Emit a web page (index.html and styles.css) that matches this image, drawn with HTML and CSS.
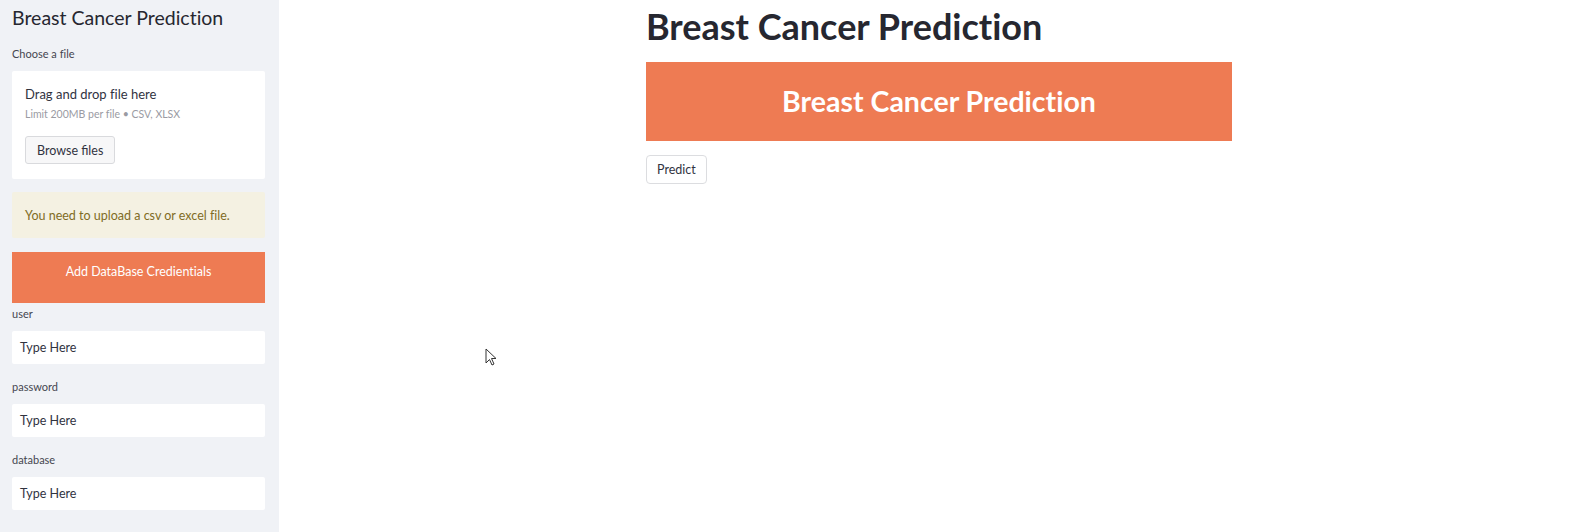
FILE: index.html
```html
<!DOCTYPE html>
<html lang="en">
<head>
<meta charset="utf-8">
<title>Breast Cancer Prediction</title>
<link rel="stylesheet" href="styles.css">
</head>
<body>
<div class="app">
  <aside class="sidebar">
    <h2 class="side-title">Breast Cancer Prediction</h2>
    <div class="label first">Choose a file</div>
    <div class="uploader">
      <div class="drop-title">Drag and drop file here</div>
      <div class="drop-limit">Limit 200MB per file • CSV, XLSX</div>
      <button class="browse">Browse files</button>
    </div>
    <div class="warning">You need to upload a csv or excel file.</div>
    <div class="cred">Add DataBase Credientials</div>
    <div class="field">
      <div class="label">user</div>
      <div class="input">Type Here</div>
    </div>
    <div class="field">
      <div class="label">password</div>
      <div class="input">Type Here</div>
    </div>
    <div class="field">
      <div class="label">database</div>
      <div class="input">Type Here</div>
    </div>
  </aside>
  <main class="main">
    <div class="content">
      <h1 class="title">Breast Cancer Prediction</h1>
      <div class="banner">Breast Cancer Prediction</div>
      <button class="predict">Predict</button>
    </div>
  </main>
</div>
<svg class="cursor" width="12" height="19" viewBox="0 0 12 19"><path d="M1 1 L1 15 L4.5 11.5 L7 17 L9 16 L6.5 10.5 L11 10.5 Z" fill="#fff" stroke="#333" stroke-width="1"/></svg>
</body>
</html>
```

FILE: styles.css
```css
* { box-sizing: border-box; }
html, body { margin: 0; padding: 0; background: #ffffff; }
body {
  font-family: "Lato", "Open Sans", "Liberation Sans", sans-serif;
  font-variant-ligatures: none;
  color: #31333f;
  position: relative;
  min-height: 532px;
  overflow: hidden;
}
.app { display: flex; min-height: 532px; }
.sidebar {
  width: 279px;
  flex: none;
  background: #f0f2f6;
  padding: 6px 14px 0 12px;
  display: flex;
  flex-direction: column;
}
.side-title {
  margin: 0;
  font-size: 19.5px;
  font-weight: 400;
  line-height: 24px;
  color: #262730;
}
.label {
  font-size: 11px;
  line-height: 16px;
  color: #454650;
  margin-bottom: 9px;
}
.label.first { margin-top: 16px; }
.uploader {
  background: #ffffff;
  border-radius: 2px;
  height: 108px;
  padding: 14px 13px 0 13px;
  display: flex;
  flex-direction: column;
  align-items: flex-start;
}
.drop-title { font-size: 13px; line-height: 18px; color: #31333f; }
.drop-limit { font-size: 10.5px; line-height: 14px; color: #9a9ba3; margin-top: 4px; }
.browse {
  margin-top: 15px;
  height: 28px;
  padding: 0 11px;
  font-family: inherit;
  font-size: 12.5px;
  color: #31333f;
  background: #f7f7f8;
  border: 1px solid #d9dadd;
  border-radius: 3px;
}
.warning {
  margin-top: 13px;
  height: 46px;
  background: #f4f1e2;
  color: #806c25;
  font-size: 12.5px;
  line-height: 18px;
  padding: 15px 0 0 13px;
  border-radius: 2px;
}
.cred {
  margin-top: 14px;
  height: 51px;
  background: #ee7b53;
  color: #fff;
  font-size: 12.5px;
  line-height: 18px;
  padding-top: 11px;
  text-align: center;
}
.field { margin-top: 16px; }
.field:last-child { margin-top: 15px; }
.cred + .field { margin-top: 3px; }
.field + .field { margin-top: 15px; }
.input {
  height: 33px;
  background: #ffffff;
  border-radius: 2px;
  font-size: 12.5px;
  line-height: 33px;
  padding-left: 8px;
  color: #31333f;
}
.main { flex: 1; }
.content {
  width: 586px;
  margin-left: 367px;
  padding-top: 4px;
  display: flex;
  flex-direction: column;
  align-items: flex-start;
}
.title {
  margin: 0;
  font-size: 36px;
  font-weight: 700;
  line-height: 44px;
  color: #262730;
}
.banner {
  margin-top: 14px;
  width: 586px;
  height: 79px;
  background: #ee7b53;
  color: #fff;
  font-size: 28.5px;
  font-weight: 700;
  line-height: 79px;
  text-align: center;
}
.predict {
  margin-top: 14px;
  height: 29px;
  padding: 0 10px;
  font-family: inherit;
  font-size: 12.5px;
  color: #31333f;
  background: #fff;
  border: 1px solid #dcdde0;
  border-radius: 4px;
}
.cursor { position: absolute; left: 485px; top: 348px; }
```
